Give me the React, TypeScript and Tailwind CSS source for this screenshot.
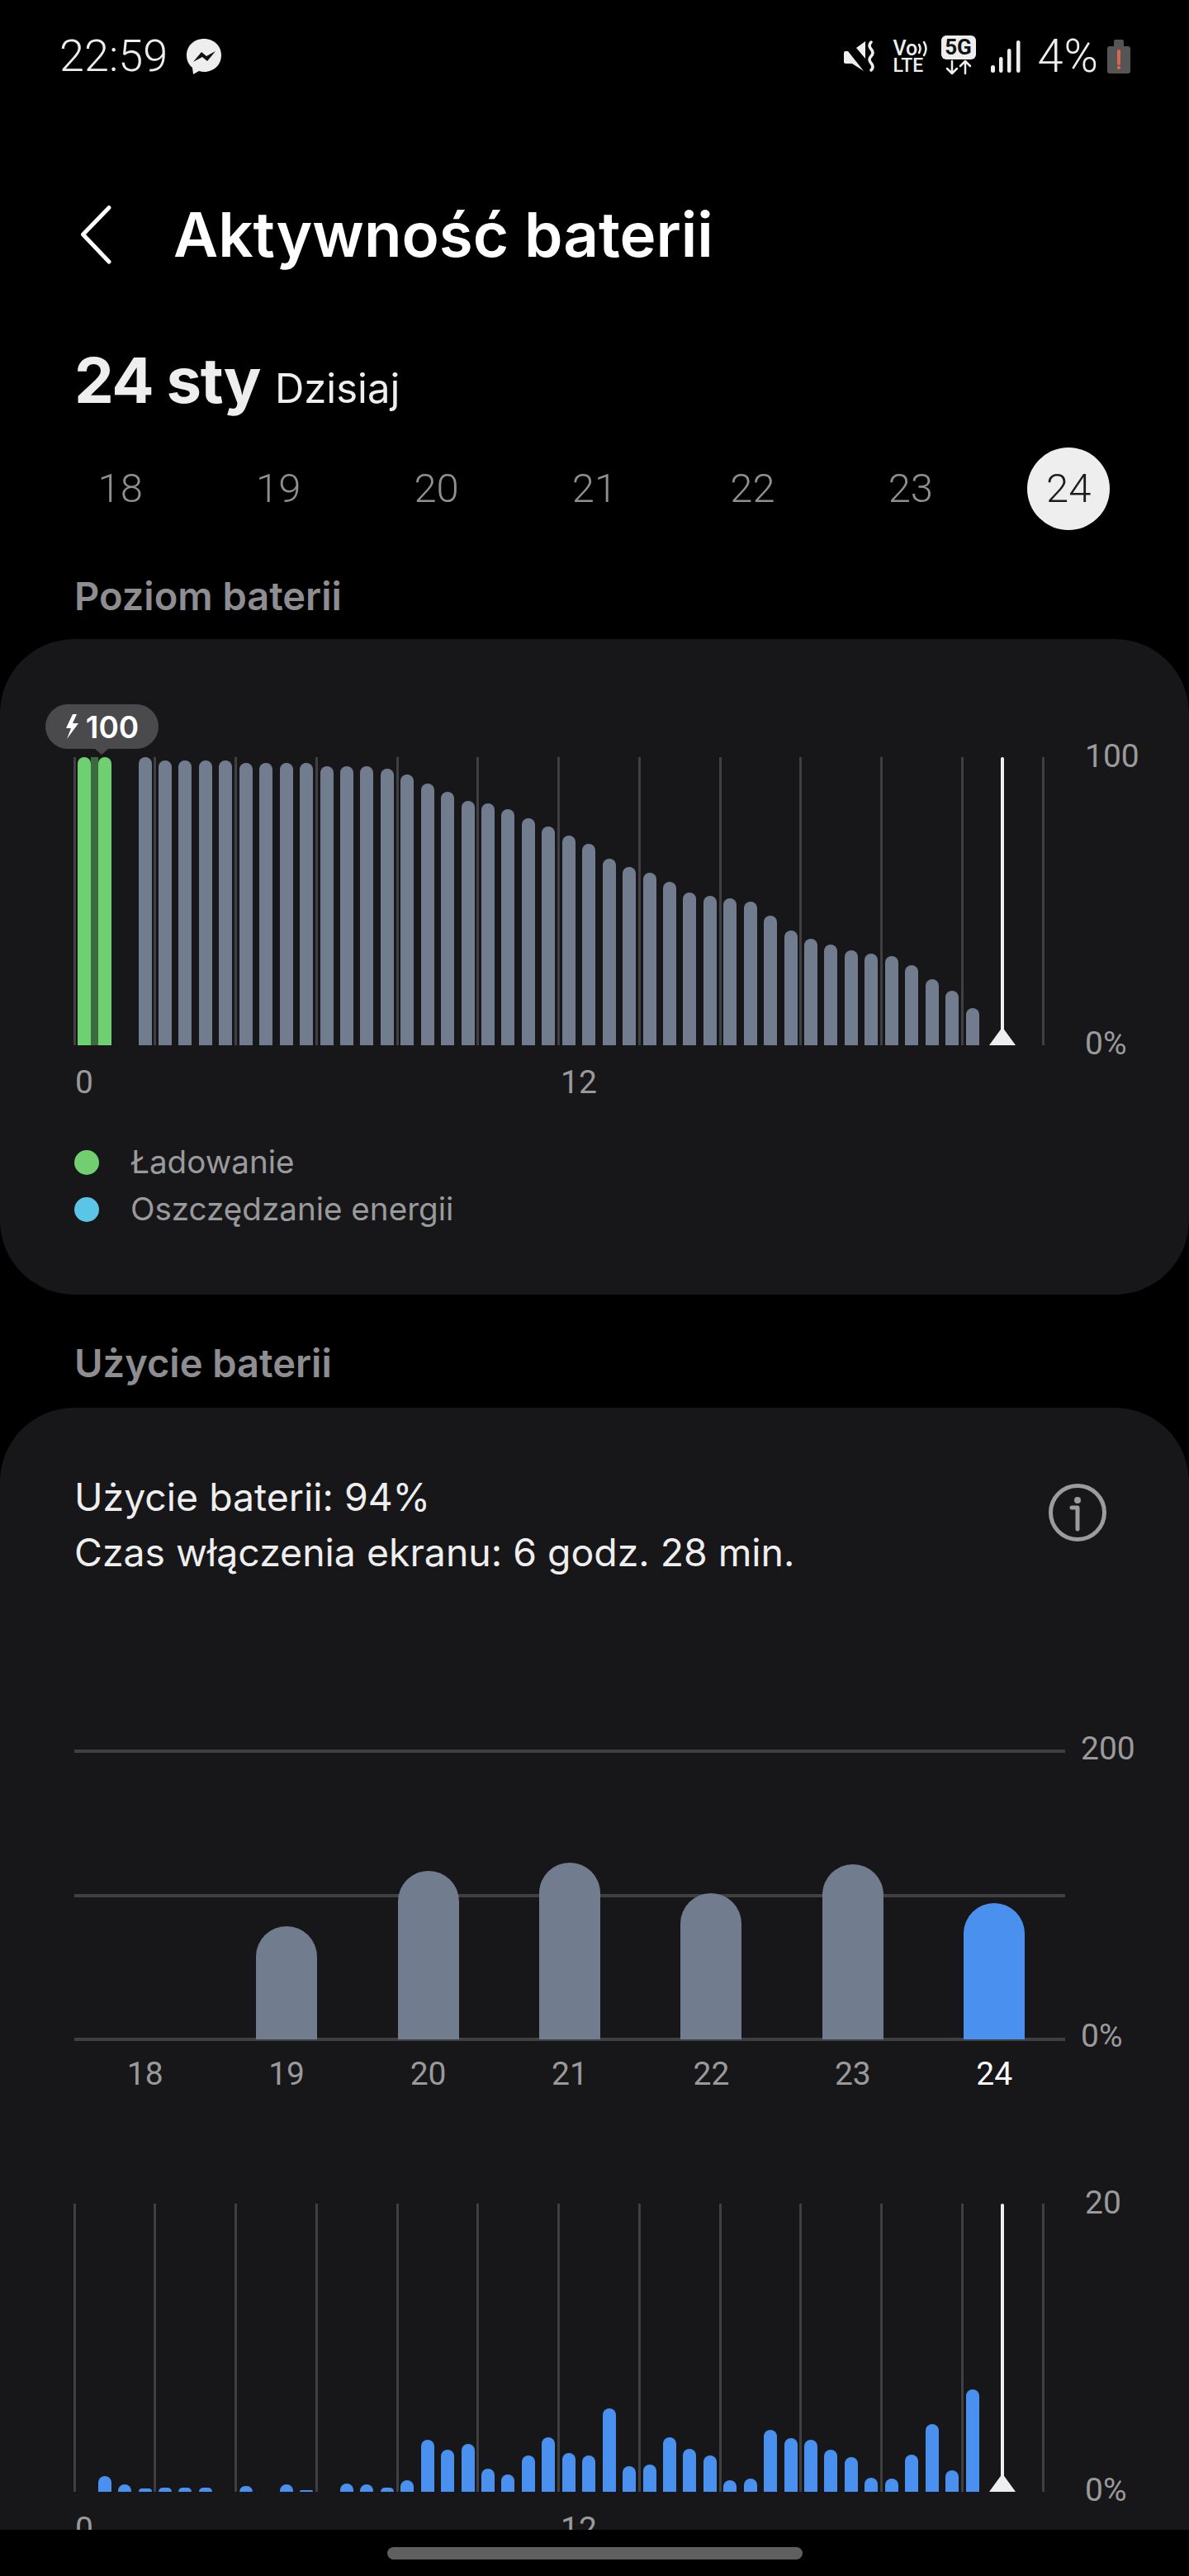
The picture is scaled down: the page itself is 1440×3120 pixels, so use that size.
import React from "react";

const level = [349,349,0,349,345,345,345,345,342,342,342,342,338,338,338,335,328,317,307,296,293,286,275,265,254,244,226,216,209,198,185,181,178,174,157,139,129,122,115,111,108,97,80,66,45];
const usage = [0,19,9,4,5,5,5,0,7,0,9,2,0,10,9,5,14,63,51,58,28,21,44,66,47,44,101,31,33,66,52,44,14,16,75,65,63,51,42,17,16,45,82,26,124];
const days = [
  { d: "18", h: 0 },
  { d: "19", h: 137 },
  { d: "20", h: 204 },
  { d: "21", h: 214 },
  { d: "22", h: 177 },
  { d: "23", h: 212 },
  { d: "24", h: 165 },
];
const roboto = "font-['Roboto',sans-serif]";

function StatusBar() {
  return (
    <div className="h-[136px] flex items-center justify-between pl-[72px] pr-[71px] text-[#eeeeee] font-['Roboto',sans-serif]">
      <div className="flex items-center gap-[22px]">
        <span className="text-[54px] leading-none font-light">22:59</span>
        <svg width="44" height="45" viewBox="0 0 44 45">
          <path d="M22 1C10 1 1 9.500 1 21c0 6 2.500 11.500 7 15l1 8 7-4c2 .6 4 .9 6 .9 12 0 21-8.500 21-20S34 1 22 1z" fill="#eeeeee" />
          <path d="M9 29l10-12 6 5 11-6-10 12-6-5z" fill="#111111" />
        </svg>
      </div>
      <div className="flex items-center">
        <svg width="40" height="38" viewBox="0 0 40 38" fill="#eeeeee">
          <path d="M16 9L27 1v21z" />
          <path d="M1 15q0-2 2-2h3l19 24-14-9H3q-2 0-2-2z" />
          <path d="M34 2q-4 4 0 8.500t0 8.500 0 8.500 0 8.500" fill="none" stroke="#eeeeee" strokeWidth="3.500" strokeLinecap="round" />
        </svg>
        <div className="ml-[21px] w-[42px] flex flex-col items-start">
          <div className="flex items-center h-[23px]">
            <span className="text-[25px] leading-none font-medium">Vo</span>
            <svg width="14" height="20" viewBox="0 0 14 20" fill="none" stroke="#eeeeee" strokeWidth="2.500" strokeLinecap="round">
              <path d="M2 5q3 5 0 10" />
              <path d="M8 2q5 8 0 16" />
            </svg>
          </div>
          <span className="text-[23px] leading-[19px] font-medium">LTE</span>
        </div>
        <div className="ml-[16px] w-[42px] flex flex-col mb-[2px]">
          <div className="h-[29px] rounded-[6px] bg-[#eeeeee] text-[#111111] text-[26px] leading-[29px] font-bold text-center">5G</div>
          <svg width="42" height="19" viewBox="0 0 42 19" fill="none" stroke="#eeeeee" strokeWidth="2.500" strokeLinecap="round" strokeLinejoin="round">
            <path d="M13 2v15M7 11l6 6 6-6" />
            <path d="M29 17V2M23 8l6-6 6 6" />
          </svg>
        </div>
        <svg className="ml-[18px]" width="36" height="39" viewBox="0 0 36 39" fill="#eeeeee">
          <rect x="0" y="30" width="5" height="9" rx="2.500" />
          <rect x="10" y="20" width="4.500" height="19" rx="2.200" />
          <rect x="20" y="10" width="4.500" height="29" rx="2.200" />
          <rect x="31" y="0" width="4.500" height="39" rx="2.200" />
        </svg>
        <span className="ml-[21px] text-[56px] leading-none font-light tracking-[1px]">4%</span>
        <svg className="ml-[10px]" width="28" height="41" viewBox="0 0 28 41">
          <path d="M8 2q0-2 2-2h8q2 0 2 2v6h5q3 0 3 3v27q0 3-3 3H3q-3 0-3-3V11q0-3 3-3h5z" fill="#555555" />
          <path d="M14 14v15" stroke="#d9674b" strokeWidth="4" strokeLinecap="round" />
          <circle cx="14" cy="34" r="2.200" fill="#d9674b" />
        </svg>
      </div>
    </div>
  );
}

function TimeChart({ data, color, topLabel, children }: { data: number[]; color: string; topLabel: string; children?: React.ReactNode }) {
  return (
    <div className="flex h-[349px]">
      <div className="relative w-[1224px] h-[349px] shrink-0">
        <div className="absolute inset-y-0 left-[-1.5px] w-[1176px] flex justify-between">
          {Array.from({ length: 13 }).map((_, i) => (
            <span key={i} className="w-[3px] h-full bg-[#404042]" />
          ))}
        </div>
        <div className="absolute inset-0 pl-[4.3px] grid grid-cols-[repeat(48,24.44px)] items-end">
          {data.map((h, i) => (
            <div
              key={i}
              className={`w-[16px] rounded-t-[8px] ${color === "level" ? (i < 2 ? "bg-[#6fd072]" : "bg-[#717c8f]") : "bg-[#4a90ee]"}`}
              style={{ height: h }}
            />
          ))}
        </div>
        <div className="absolute top-0 bottom-0 left-[1122px] w-[4px] bg-[#eeeeee] rounded-t-full" />
        <svg className="absolute bottom-0 left-[1108px]" width="32" height="22" viewBox="0 0 32 22">
          <path d="M16 0L32 22H0z" fill="#eeeeee" />
        </svg>
        {children}
      </div>
      <div className={`${roboto} -mt-[26px] h-[398px] flex flex-col justify-between text-[39px] leading-[50px] text-[#9a9a9c]`}>
        <span>{topLabel}</span>
        <span>0%</span>
      </div>
    </div>
  );
}

function AxisLabels() {
  return (
    <div className={`${roboto} mt-[20px] h-[50px] flex text-[39px] leading-[50px] text-[#9a9a9c]`}>
      <span className="w-[589px] pl-[1px]">0</span>
      <span>12</span>
    </div>
  );
}

export default function App() {
  return (
    <div className="w-[1440px] h-[3120px] bg-black font-['Inter',sans-serif] overflow-hidden">
      <div className="h-[3064px] overflow-hidden">
        <StatusBar />

        <div className="mt-[100px] h-[96px] flex items-center pl-[97px]">
          <svg width="38" height="72" viewBox="0 0 38 72" fill="none" stroke="#ffffff" strokeWidth="5" strokeLinecap="round" strokeLinejoin="round">
            <path d="M35 3.500L3.500 36 35 69" />
          </svg>
          <h1 className="ml-[75px] text-[74.500px] leading-none font-semibold text-white">Aktywność baterii</h1>
        </div>

        <div className="mt-[78px] h-[100px] pl-[90px] flex items-baseline text-[#eeeeee]">
          <span className="text-[76px] leading-[100px] font-bold tracking-[-1.500px]">24 sty</span>
          <span className="ml-[18px] text-[49px] leading-[100px] font-normal">Dzisiaj</span>
        </div>

        <div className={`${roboto} mt-[32px] h-[100px] px-[50px] grid grid-cols-7 text-[49px] font-light text-[#8f8f8f]`}>
          {["18", "19", "20", "21", "22", "23"].map((d) => (
            <div key={d} className="flex items-center justify-center">{d}</div>
          ))}
          <div className="flex items-center justify-center">
            <div className="w-[100px] h-[100px] rounded-full bg-[#eeeeee] text-[#1c1c1c] flex items-center justify-center">24</div>
          </div>
        </div>

        <h2 className="mt-[50px] h-[60px] pl-[90px] text-[47px] leading-[60px] font-semibold text-[#8e8e92]">Poziom baterii</h2>

        <section className="mt-[22px] h-[794px] rounded-[90px] bg-[#171719] pl-[90px] pt-[143px]">
          <TimeChart data={level} color="level" topLabel="100">
            <div className="absolute top-0 bottom-0 left-[20px] w-[9px] bg-[#3a6a3e]" />
            <div className="absolute left-[-35px] top-[-64px] w-[137px] h-[54px] rounded-full bg-[#4a4a4c] flex items-center justify-center gap-[8px]">
              <svg width="17" height="30" viewBox="0 0 17 30" fill="#ffffff">
                <path d="M9 0L1 17h6L2 30 16 11H9l5-11z" />
              </svg>
              <span className="text-[37px] leading-none font-semibold text-white">100</span>
            </div>
            <svg className="absolute left-[25px] top-[-10px]" width="16" height="7" viewBox="0 0 16 7">
              <path d="M0 0h16L8 7z" fill="#4a4a4c" />
            </svg>
          </TimeChart>
          <AxisLabels />
          <div className="mt-[43px] flex flex-col text-[38.600px] text-[#9a9a9c]">
            <div className="h-[57px] flex items-center gap-[38px]">
              <span className="w-[30px] h-[30px] rounded-full bg-[#71cf71]" />
              <span>Ładowanie</span>
            </div>
            <div className="h-[57px] flex items-center gap-[38px]">
              <span className="w-[30px] h-[30px] rounded-full bg-[#5bc5e8]" />
              <span>Oszczędzanie energii</span>
            </div>
          </div>
        </section>

        <h2 className="mt-[53px] h-[60px] pl-[90px] text-[47px] leading-[60px] font-semibold text-[#8e8e92]">Użycie baterii</h2>

        <section className="mt-[24px] h-[1500px] rounded-t-[90px] bg-[#171719] pl-[90px] pr-[100px] pt-[75px]">
          <div className="flex justify-between items-start">
            <div className="text-[46.400px] leading-[67px] text-[#eeeeee]">
              <p>Użycie baterii: 94%</p>
              <p>Czas włączenia ekranu: 6 godz. 28 min.</p>
            </div>
            <svg className="mt-[17px]" width="70" height="70" viewBox="0 0 70 70" fill="none" stroke="#9c9c9c" strokeWidth="5" strokeLinecap="round" strokeLinejoin="round">
              <circle cx="35" cy="35" r="32.500" />
              <path d="M28 29h7v26" />
              <circle cx="35" cy="20" r="4" fill="#9c9c9c" stroke="none" />
            </svg>
          </div>

          <div className="mt-[205px] flex h-[353px]">
            <div className="relative w-[1219px] h-[353px] shrink-0">
              <div className="absolute inset-y-0 left-0 w-[1200px] flex flex-col justify-between">
                <span className="h-[4px] bg-[#404042]" />
                <span className="h-[4px] bg-[#404042]" />
                <span className="h-[4px] bg-[#404042]" />
              </div>
              <div className="absolute inset-y-0 left-0 w-[1200px] pb-[2px] grid grid-cols-7 items-end justify-items-center">
                {days.map((b) => (
                  <div
                    key={b.d}
                    className={`w-[74px] rounded-t-[37px] ${b.d === "24" ? "bg-[#4a90ee]" : "bg-[#717c8f]"}`}
                    style={{ height: b.h }}
                  />
                ))}
              </div>
            </div>
            <div className={`${roboto} -mt-[26px] h-[398px] flex flex-col justify-between text-[39px] leading-[50px] text-[#9a9a9c]`}>
              <span>200</span>
              <span>0%</span>
            </div>
          </div>

          <div className={`${roboto} mt-[15px] w-[1200px] h-[50px] grid grid-cols-7 text-[39px] leading-[50px] text-center text-[#9a9a9c]`}>
            {days.map((b) => (
              <span key={b.d} className={b.d === "24" ? "text-white" : ""}>{b.d}</span>
            ))}
          </div>

          <div className="mt-[132px]">
            <TimeChart data={usage} color="usage" topLabel="20" />
            <AxisLabels />
          </div>
        </section>
      </div>
      <div className="h-[56px] flex justify-center pt-[21px]">
        <div className="w-[503px] h-[15px] rounded-full bg-[#5f5f5f]" />
      </div>
    </div>
  );
}
